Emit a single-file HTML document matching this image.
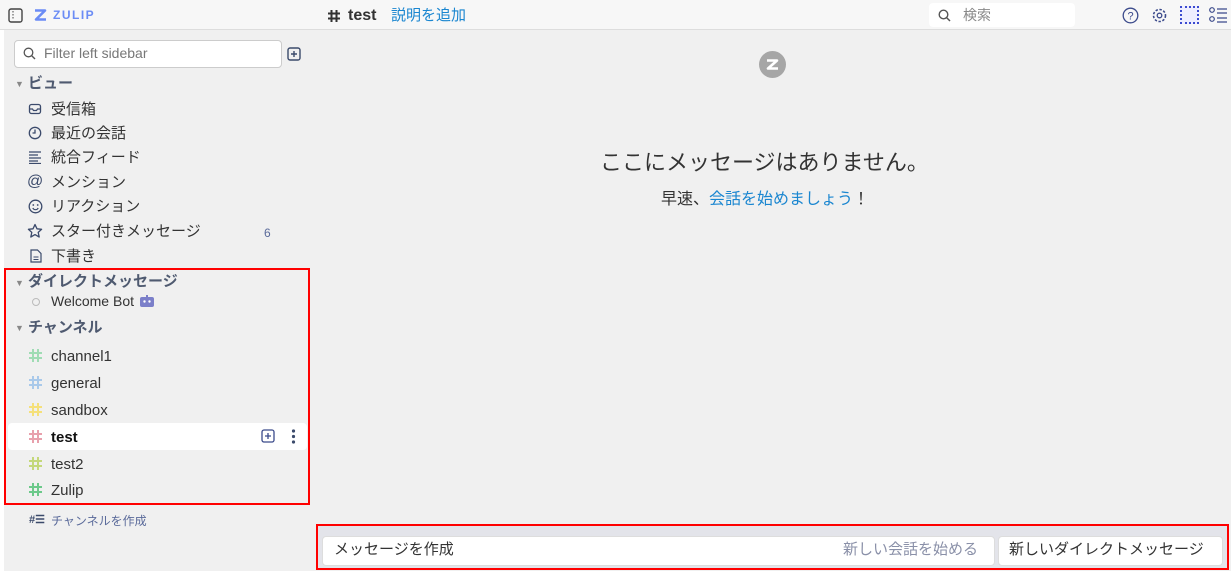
<!DOCTYPE html>
<html><head><meta charset="utf-8"><style>
*{box-sizing:border-box;margin:0;padding:0}
body{width:1231px;height:571px;overflow:hidden;background:#f0f0f0;font-family:"Liberation Sans","Noto Sans CJK JP",sans-serif;color:#333;position:relative}
.abs{position:absolute}
.hdr{left:0;top:0;width:1231px;height:30px;background:#f7f7f7;border-bottom:1px solid #ddd}
.t{position:absolute;white-space:nowrap;line-height:1}
.item{font-size:15px;color:#333}
.sec{font-size:15px;font-weight:bold;color:#4f5a70}
</style></head><body>
<div class="abs" style="left:0;top:0;width:4px;height:571px;background:#fff"></div>
<div class="abs hdr"></div>
<svg class="abs" style="left:8px;top:8px" width="15" height="15" viewBox="0 0 15 15"><rect x="1" y="1" width="13" height="13" rx="2" fill="none" stroke="#444" stroke-width="1.4"/><line x1="5" y1="3" x2="5" y2="12" stroke="#444" stroke-width="1" stroke-dasharray="1.5 1.5"/></svg>
<svg class="abs" style="left:34px;top:9px" width="13" height="12" viewBox="0 0 13 12"><path d="M1 1.5H11L2 10.5H12" fill="none" stroke="#6b8cf5" stroke-width="2.6" stroke-linejoin="round"/></svg>
<div class="t" style="left:53px;top:9px;font-size:12px;font-weight:bold;color:#6b8cf5;letter-spacing:1.5px">ZULIP</div>
<svg class="abs" style="left:327px;top:9px" width="14" height="14" viewBox="0 0 14 14"><path d="M4.5 1v12M9.5 1v12M1 4.5h12M1 9.5h12" stroke="#333" stroke-width="2"/></svg>
<div class="t" style="left:348px;top:8px;font-size:16px;font-weight:bold;color:#333">test</div>
<div class="t" style="left:391px;top:8px;font-size:15px;color:#1a86d0">説明を追加</div>
<div class="abs" style="left:929px;top:3px;width:146px;height:24px;background:#fff;border-radius:4px"></div>
<svg class="abs" style="left:938px;top:9px" width="13" height="13" viewBox="0 0 13 13"><circle cx="5.5" cy="5.5" r="4.3" fill="none" stroke="#555" stroke-width="1.4"/><line x1="8.6" y1="8.6" x2="12" y2="12" stroke="#555" stroke-width="1.5"/></svg>
<div class="t" style="left:963px;top:8px;font-size:14px;color:#888">検索</div>
<svg class="abs" style="left:1122px;top:7px" width="17" height="17" viewBox="0 0 17 17"><circle cx="8.5" cy="8.5" r="7.3" fill="none" stroke="#3b4a8b" stroke-width="1.3"/><text x="8.5" y="12.5" font-size="11" text-anchor="middle" fill="#3b4a8b" font-family="Liberation Sans">?</text></svg>
<svg class="abs" style="left:1151px;top:7px" width="17" height="17" viewBox="0 0 17 17"><circle cx="8.5" cy="8.5" r="6" fill="none" stroke="#3b4a8b" stroke-width="1.6" stroke-dasharray="2.4 1.6"/><circle cx="8.5" cy="8.5" r="2.3" fill="none" stroke="#3b4a8b" stroke-width="1.3"/></svg>
<div class="abs" style="left:1180px;top:6px;width:19px;height:18px;border:2px dotted #3b4ad0;background:#eef"></div>
<svg class="abs" style="left:1208px;top:6px" width="20" height="19" viewBox="0 0 20 19"><circle cx="4" cy="4" r="2.3" fill="none" stroke="#3b4a8b" stroke-width="1.2"/><circle cx="4" cy="13" r="2.3" fill="none" stroke="#3b4a8b" stroke-width="1.2"/><path d="M9 3h10M9 7h10M9 12h10M9 16h10" stroke="#3b4a8b" stroke-width="1.3"/></svg>
<!-- sidebar -->
<div class="abs" style="left:14px;top:40px;width:268px;height:28px;background:#fff;border:1px solid #ccc;border-radius:4px"></div>
<svg class="abs" style="left:23px;top:47px" width="13" height="13" viewBox="0 0 13 13"><circle cx="5.5" cy="5.5" r="4.3" fill="none" stroke="#555" stroke-width="1.3"/><line x1="8.6" y1="8.6" x2="12" y2="12" stroke="#555" stroke-width="1.4"/></svg>
<div class="t" style="left:44px;top:46px;font-size:14px;color:#777">Filter left sidebar</div>
<svg class="abs" style="left:287px;top:47px" width="14" height="14" viewBox="0 0 14 14"><rect x="1" y="1" width="12" height="12" rx="2" fill="none" stroke="#3b4a6b" stroke-width="1.4"/><path d="M7 4v6M4 7h6" stroke="#3b4a6b" stroke-width="1.4"/></svg>

<div class="t" style="left:15px;top:80px;font-size:9px;color:#888">▼</div><div class="t sec" style="left:28px;top:76px">ビュー</div>
<svg class="abs" style="left:28px;top:102px" width="14" height="14" viewBox="0 0 14 14"><rect x="1.5" y="2.5" width="11" height="9" rx="2" fill="none" stroke="#3b4a6b" stroke-width="1.3"/><path d="M1.5 7h3l1 1.5h3l1-1.5h3" fill="none" stroke="#3b4a6b" stroke-width="1.2"/></svg>
<div class="t item" style="left:51px;top:102px">受信箱</div>
<svg class="abs" style="left:28px;top:126px" width="14" height="14" viewBox="0 0 14 14"><circle cx="7" cy="7" r="5.7" fill="none" stroke="#3b4a6b" stroke-width="1.3"/><path d="M7 3.5V7H4.5" fill="none" stroke="#3b4a6b" stroke-width="1.3"/></svg>
<div class="t item" style="left:51px;top:126px">最近の会話</div>
<svg class="abs" style="left:28px;top:150px" width="14" height="14" viewBox="0 0 14 14"><path d="M1 2h12M1 5h9M1 8h12M1 11h9M1 13.5h12" stroke="#3b4a6b" stroke-width="1.2"/></svg>
<div class="t item" style="left:51px;top:150px">統合フィード</div>
<div class="t" style="left:27px;top:174px;font-size:16px;color:#3b4a6b">@</div>
<div class="t item" style="left:51px;top:175px">メンション</div>
<svg class="abs" style="left:28px;top:199px" width="15" height="15" viewBox="0 0 15 15"><circle cx="7.5" cy="7.5" r="6.3" fill="none" stroke="#3b4a6b" stroke-width="1.3"/><circle cx="5.3" cy="6" r=".9" fill="#3b4a6b"/><circle cx="9.7" cy="6" r=".9" fill="#3b4a6b"/><path d="M4.8 9a3 3 0 0 0 5.4 0" fill="none" stroke="#3b4a6b" stroke-width="1.2"/></svg>
<div class="t item" style="left:51px;top:199px">リアクション</div>
<svg class="abs" style="left:27px;top:223px" width="16" height="16" viewBox="0 0 16 16"><path d="M8 1.5l2 4.3 4.6.5-3.4 3.1 1 4.6L8 11.6 3.8 14l1-4.6L1.4 6.3 6 5.8z" fill="none" stroke="#3b4a6b" stroke-width="1.3" stroke-linejoin="round"/></svg>
<div class="t item" style="left:51px;top:224px">スター付きメッセージ</div>
<div class="t" style="left:264px;top:227px;font-size:12px;color:#5a6a9a">6</div>
<svg class="abs" style="left:30px;top:249px" width="12" height="14" viewBox="0 0 12 14"><path d="M1 1h6.5L11 4.5V13H1z" fill="none" stroke="#3b4a6b" stroke-width="1.2"/><path d="M3.5 8h5M3.5 10.5h5" stroke="#3b4a6b" stroke-width="1"/></svg>
<div class="t item" style="left:51px;top:249px">下書き</div>

<div class="abs" style="left:4px;top:268px;width:306px;height:237px;border:2px solid #f00"></div>
<div class="t" style="left:15px;top:279px;font-size:9px;color:#888">▼</div><div class="t sec" style="left:28px;top:274px">ダイレクトメッセージ</div>
<div class="abs" style="left:32px;top:298px;width:8px;height:8px;border:1px solid #bbb;border-radius:50%"></div>
<div class="t" style="left:51px;top:294px;font-size:14px;color:#333">Welcome Bot</div>
<svg class="abs" style="left:140px;top:295px" width="14" height="12" viewBox="0 0 14 12"><rect x="0" y="2" width="14" height="10" rx="2" fill="#7b7fc9"/><rect x="6" y="0" width="2" height="3" fill="#7b7fc9"/><circle cx="4.5" cy="6.5" r="1.2" fill="#fff"/><circle cx="9.5" cy="6.5" r="1.2" fill="#fff"/></svg>
<div class="t" style="left:15px;top:324px;font-size:9px;color:#888">▼</div><div class="t sec" style="left:28px;top:320px">チャンネル</div>
<div class="abs" style="left:8px;top:423px;width:299px;height:27px;background:#fff;border-radius:4px"></div>
<svg class="abs" style="left:28px;top:348px" width="15" height="15" viewBox="0 0 15 15"><path d="M5 1v13M10 1v13M1 5h13M1 10h13" stroke="#9fdcb4" stroke-width="2"/></svg><div class="t item" style="left:51px;top:349px">channel1</div>
<svg class="abs" style="left:28px;top:375px" width="15" height="15" viewBox="0 0 15 15"><path d="M5 1v13M10 1v13M1 5h13M1 10h13" stroke="#a9c9ea" stroke-width="2"/></svg><div class="t item" style="left:51px;top:376px">general</div>
<svg class="abs" style="left:28px;top:402px" width="15" height="15" viewBox="0 0 15 15"><path d="M5 1v13M10 1v13M1 5h13M1 10h13" stroke="#f5e07a" stroke-width="2"/></svg><div class="t item" style="left:51px;top:403px">sandbox</div>
<svg class="abs" style="left:28px;top:429px" width="15" height="15" viewBox="0 0 15 15"><path d="M5 1v13M10 1v13M1 5h13M1 10h13" stroke="#e8a0ac" stroke-width="2"/></svg><div class="t item" style="left:51px;top:430px;font-weight:bold;color:#111">test</div>
<svg class="abs" style="left:261px;top:429px" width="14" height="14" viewBox="0 0 14 14"><rect x="1" y="1" width="12" height="12" rx="2" fill="none" stroke="#3b4a8b" stroke-width="1.3"/><path d="M7 4v6M4 7h6" stroke="#3b4a8b" stroke-width="1.3"/></svg>
<svg class="abs" style="left:291px;top:429px" width="5" height="15" viewBox="0 0 5 15"><circle cx="2.5" cy="2" r="1.6" fill="#3b4a6b"/><circle cx="2.5" cy="7.5" r="1.6" fill="#3b4a6b"/><circle cx="2.5" cy="13" r="1.6" fill="#3b4a6b"/></svg>
<svg class="abs" style="left:28px;top:456px" width="15" height="15" viewBox="0 0 15 15"><path d="M5 1v13M10 1v13M1 5h13M1 10h13" stroke="#c4d87a" stroke-width="2"/></svg><div class="t item" style="left:51px;top:457px">test2</div>
<svg class="abs" style="left:28px;top:482px" width="15" height="15" viewBox="0 0 15 15"><path d="M5 1v13M10 1v13M1 5h13M1 10h13" stroke="#6cc98a" stroke-width="2"/></svg><div class="t item" style="left:51px;top:483px">Zulip</div>
<div class="t" style="left:29px;top:515px;font-size:11px;font-weight:bold;color:#3b4a6b">#☰</div>
<div class="t" style="left:51px;top:515px;font-size:12px;color:#5a6a9a">チャンネルを作成</div>

<!-- main -->
<div class="abs" style="left:759px;top:51px;width:27px;height:27px;border-radius:50%;background:#a6a6a6"></div>
<svg class="abs" style="left:765px;top:58px" width="15" height="13" viewBox="0 0 15 13"><path d="M2 2.5H12L3 10.5H13" fill="none" stroke="#fff" stroke-width="2.6" stroke-linejoin="round"/></svg>
<div class="t" style="left:600px;top:152px;font-size:22px;color:#333">ここにメッセージはありません。</div>
<div class="t" style="left:661px;top:192px;font-size:16px;color:#333">早速、<span style="color:#1a86d0">会話を始めましょう</span>！</div>

<div class="abs" style="left:316px;top:524px;width:913px;height:46px;border:2px solid #f00;background:#e3e4ea"></div>
<div class="abs" style="left:322px;top:536px;width:673px;height:30px;background:#fff;border:1px solid #ddd;border-radius:4px"></div>
<div class="t" style="left:334px;top:542px;font-size:15px;color:#333">メッセージを作成</div>
<div class="t" style="left:843px;top:542px;font-size:15px;color:#8a90a8">新しい会話を始める</div>
<div class="abs" style="left:998px;top:536px;width:225px;height:30px;background:#fff;border:1px solid #ddd;border-radius:4px"></div>
<div class="t" style="left:1009px;top:542px;font-size:15px;color:#333">新しいダイレクトメッセージ</div>
</body></html>
